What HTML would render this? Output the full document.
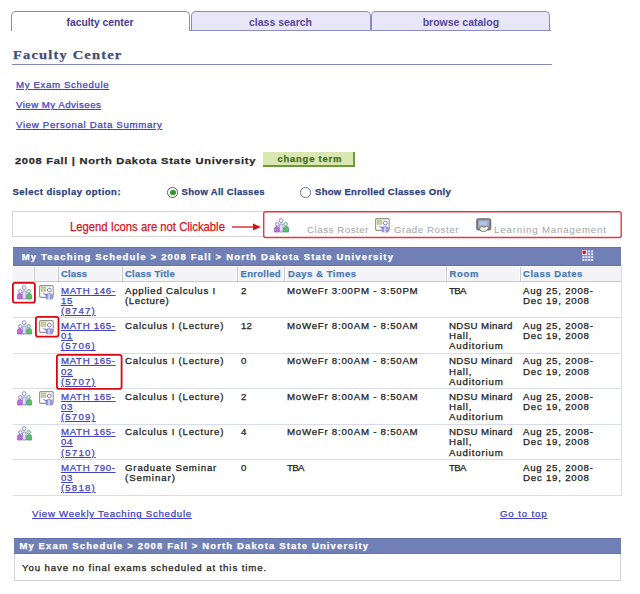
<!DOCTYPE html>
<html>
<head>
<meta charset="utf-8">
<title>Faculty Center</title>
<style>
html,body{margin:0;padding:0;background:#fff;}
body{width:640px;height:594px;position:relative;overflow:hidden;font-family:"Liberation Sans",sans-serif;font-size:10px;color:#222;}
.a{position:absolute;}
.t{position:absolute;white-space:nowrap;line-height:12px;font-family:"Liberation Sans",sans-serif;-webkit-text-stroke:0.25px;}
.lk{color:#4444c0;text-decoration:underline;}
.c{color:#222;}
.lk.c{color:#4444c0;}
.tab{position:absolute;top:10.6px;height:19.4px;box-sizing:border-box;border:1.3px solid #8a88c6;border-bottom:none;border-radius:5px 5px 0 0;background:#e9e7f7;}
.tabt{position:absolute;top:15.6px;font-size:10.5px;line-height:13px;font-weight:bold;color:#5248a0;white-space:nowrap;text-align:center;}
.hd{color:#4a7ab5;}
.nv{color:#2c3f7c;}
.gr{color:#a4a4a4;-webkit-text-stroke:0;}
.vl{position:absolute;top:267px;width:3px;height:14px;background:#fff;}
.vl::after{content:"";position:absolute;left:1px;top:0;width:1px;height:100%;background:#c4c8d4;}
.hl{position:absolute;left:13px;width:608.5px;height:1px;background:#d8dbec;}
.rb{position:absolute;box-sizing:border-box;border:1.8px solid #da0814;border-radius:3px;}
</style>
</head>
<body>
<div class="tab" style="left:10.8px;width:178.8px;background:#fff;height:20px;"></div>
<div class="tab" style="left:190.5px;width:180px;"></div>
<div class="tab" style="left:371.3px;width:179.2px;"></div>
<div class="a" style="left:188.6px;top:29.5px;width:362px;height:1.1px;background:#8f8dc8;"></div>
<div class="tabt" style="left:11px;width:178px;font-size:10.3px;color:#44389a;">faculty center</div>
<div class="tabt" style="left:190.5px;width:180px;">class search</div>
<div class="tabt" style="left:371.3px;width:179.2px;">browse catalog</div>
<div class="t " style="left:12.6px;top:46px;font-size:13.2px;line-height:18px;letter-spacing:1.06px;font-weight:bold;font-family:'Liberation Serif',serif;color:#3f4c7c;transform-origin:0 50%;transform:scaleX(1.1);">Faculty Center</div>
<div class="a" style="left:12px;top:64.1px;width:540px;height:1.4px;background:#7f88b8;"></div>
<div class="t lk" style="left:16px;top:79px;font-size:8.9px;line-height:12px;letter-spacing:0.57px;transform-origin:0 50%;transform:scaleX(1.09);">My Exam Schedule</div>
<div class="t lk" style="left:16px;top:99px;font-size:8.9px;line-height:12px;letter-spacing:0.43px;transform-origin:0 50%;transform:scaleX(1.09);">View My Advisees</div>
<div class="t lk" style="left:16px;top:119px;font-size:8.9px;line-height:12px;letter-spacing:0.62px;transform-origin:0 50%;transform:scaleX(1.09);">View Personal Data Summary</div>
<div class="t " style="left:14.7px;top:154.4px;font-size:9.8px;line-height:14px;letter-spacing:0.62px;font-weight:bold;color:#2a2a2a;transform-origin:0 50%;transform:scaleX(1.13);">2008 Fall | North Dakota State University</div>
<div class="a" style="left:263px;top:152px;width:92px;height:14.6px;background:#dbe7b3;border-right:2px solid #6f9a3a;border-bottom:2px solid #6f9a3a;box-sizing:border-box;"></div>
<div class="t " style="left:277.4px;top:153.4px;font-size:9.5px;line-height:12px;letter-spacing:0.76px;font-weight:bold;color:#3f7020;">change term</div>
<div class="t nv" style="left:12.5px;top:186px;font-size:9.5px;line-height:12px;letter-spacing:0.47px;font-weight:bold;">Select display option:</div>
<div class="a" style="left:167.3px;top:187.1px;width:8.6px;height:8.6px;border:1.4px solid #5a6276;border-radius:50%;background:#fff;"></div>
<div class="a" style="left:170.4px;top:190.2px;width:5.2px;height:5.2px;border-radius:50%;background:#2c9a24;"></div>
<div class="t nv" style="left:181.5px;top:186px;font-size:9.5px;line-height:12px;letter-spacing:0.32px;font-weight:bold;">Show All Classes</div>
<div class="a" style="left:300.3px;top:187px;width:8.6px;height:8.6px;border:1.5px solid #687082;border-radius:50%;background:#fff;"></div>
<div class="t nv" style="left:315px;top:186px;font-size:9.5px;line-height:12px;letter-spacing:0.3px;font-weight:bold;">Show Enrolled Classes Only</div>
<div class="a" style="left:12px;top:211.2px;width:252px;height:26px;box-sizing:border-box;border:1.2px solid #d6d6d6;border-right:none;"></div>
<svg class="a" style="left:261.1px;top:208.7px;" width="362.9" height="31.2"><rect x="2.7" y="2.7" width="357.5" height="25.8" rx="2" fill="none" stroke="#e03a42" stroke-width="1.4"/></svg>
<div class="t" style="left:69.6px;top:219.6px;font-size:12.6px;line-height:14px;color:#d4141c;transform-origin:0 50%;transform:scaleX(0.8958);">Legend Icons are not Clickable</div>
<svg class="a" style="left:230.6px;top:221.8px;" width="32" height="10"><path d="M1 5H24" stroke="#d4141c" stroke-width="1.3"/><path d="M22 1.5L30 5L22 8.5Z" fill="#d4141c"/></svg>
<svg class="a" style="left:274px;top:217.7px;" width="16" height="15"><path d="M0.6 14V10.4Q0.6 8.6 2.8 8.6Q5 8.6 5 10.4V14Z" fill="#cc66dc" stroke="#9060b8" stroke-width="0.8"/><path d="M9.7 14V10.4Q9.7 8.6 12.1 8.6Q14.6 8.6 14.6 10.4V14Z" fill="#52c664" stroke="#509070" stroke-width="0.8"/><path d="M5.6 14V7.6Q5.6 5.8 7.3 5.8Q9 5.8 9 7.6V14Z" fill="#e4e4ff" stroke="#7c7cc8" stroke-width="0.8"/><circle cx="3.3" cy="6.4" r="1.7" fill="#fff" stroke="#9478b8" stroke-width="1"/><circle cx="11.6" cy="6.2" r="1.7" fill="#f0fff4" stroke="#58a486" stroke-width="1"/><circle cx="7.1" cy="2.6" r="1.9" fill="#fff" stroke="#8888c8" stroke-width="1"/></svg>
<div class="t gr" style="left:307px;top:224px;font-size:8.9px;line-height:12px;letter-spacing:0.51px;transform-origin:0 50%;transform:scaleX(1.09);">Class Roster</div>
<svg class="a" style="left:374.6px;top:217.6px;" width="15" height="15"><rect x="0.6" y="0.6" width="13.6" height="11.8" rx="1.2" fill="#fff" stroke="#96967e" stroke-width="1.1"/><rect x="1.8" y="1.7" width="5.4" height="5" fill="#b9b994"/><path d="M1.8 3.4H7.2M1.8 5.1H7.2M4.5 1.7V6.7" stroke="#dcdcc0" stroke-width="0.6"/><path d="M7.2 14V10.2Q7.2 8.4 10.3 8.4Q13.4 8.4 13.4 10.2V14Z" fill="#9c9ce6" stroke="#7c7ccc" stroke-width="0.6"/><path d="M10 9.2V14" stroke="#e6e6ff" stroke-width="1.4"/><path d="M3.2 8.1L8.2 8.9V11.2Z" fill="#7676d4"/><circle cx="10.3" cy="5" r="1.9" fill="#fff" stroke="#7c7cc8" stroke-width="1"/></svg>
<div class="t gr" style="left:394px;top:224px;font-size:8.9px;line-height:12px;letter-spacing:0.53px;transform-origin:0 50%;transform:scaleX(1.09);">Grade Roster</div>
<svg class="a" style="left:476px;top:217.5px;" width="16" height="15"><rect x="1" y="1" width="13.4" height="10.6" rx="1.6" fill="#a4a8b4" stroke="#6a6e78" stroke-width="1.7"/><rect x="3.2" y="3.3" width="8.2" height="4.2" fill="#aac4ec"/><path d="M3.6 11.2Q3.2 8.6 5.6 8.3L8.2 9.2L10.8 8.2Q13.2 8.8 12.6 10.6Q10.6 13.6 7.4 13.6Q4.6 13.6 3.6 11.2Z" fill="#f2f2dc" stroke="#66665a" stroke-width="0.8"/></svg>
<div class="t gr" style="left:493.7px;top:224px;font-size:8.9px;line-height:12px;letter-spacing:0.77px;transform-origin:0 50%;transform:scaleX(1.09);">Learning Management</div>
<div class="a" style="left:13px;top:247px;width:608.4px;height:19.4px;background:#7080b6;box-sizing:border-box;border-top:1px solid #6272ac;border-bottom:1px solid #6272ac;"></div>
<div class="t " style="left:21.7px;top:249.6px;font-size:9.5px;line-height:13px;letter-spacing:1.17px;font-weight:bold;color:#fff;">My Teaching Schedule &gt; 2008 Fall &gt; North Dakota State University</div>
<svg class="a" style="left:581.7px;top:249.7px;" width="12" height="12"><rect x="0" y="0" width="4.9" height="5" fill="#fdeef0"/><rect x="3.30" y="0.40" width="2.1" height="2.05" fill="#e2e2ff"/><rect x="6.20" y="0.40" width="2.1" height="2.05" fill="#e2e2ff"/><rect x="9.10" y="0.40" width="2.1" height="2.05" fill="#e2e2ff"/><rect x="0.40" y="3.25" width="2.1" height="2.05" fill="#e2e2ff"/><rect x="3.30" y="3.25" width="2.1" height="2.05" fill="#e2e2ff"/><rect x="6.20" y="3.25" width="2.1" height="2.05" fill="#e2e2ff"/><rect x="9.10" y="3.25" width="2.1" height="2.05" fill="#e2e2ff"/><rect x="0.40" y="6.10" width="2.1" height="2.05" fill="#e2e2ff"/><rect x="3.30" y="6.10" width="2.1" height="2.05" fill="#e2e2ff"/><rect x="6.20" y="6.10" width="2.1" height="2.05" fill="#e2e2ff"/><rect x="9.10" y="6.10" width="2.1" height="2.05" fill="#e2e2ff"/><rect x="0.40" y="8.95" width="2.1" height="2.05" fill="#e2e2ff"/><rect x="3.30" y="8.95" width="2.1" height="2.05" fill="#e2e2ff"/><rect x="6.20" y="8.95" width="2.1" height="2.05" fill="#e2e2ff"/><rect x="9.10" y="8.95" width="2.1" height="2.05" fill="#e2e2ff"/><rect x="0.5" y="0.5" width="3.4" height="3.6" rx="0.8" fill="#df1c2c"/></svg>
<div class="a" style="left:13px;top:267.3px;width:608.4px;height:14.6px;background:#f4f4f7;border-bottom:1px solid #c6cad4;box-sizing:border-box;"></div>
<div class="vl" style="left:32.7px;"></div>
<div class="vl" style="left:56.8px;"></div>
<div class="vl" style="left:120.7px;"></div>
<div class="vl" style="left:236.4px;"></div>
<div class="vl" style="left:283.1px;"></div>
<div class="vl" style="left:444.5px;"></div>
<div class="vl" style="left:519px;"></div>
<div class="t hd" style="left:61px;top:268.4px;font-size:9.5px;line-height:12px;letter-spacing:0.16px;font-weight:bold;">Class</div>
<div class="t hd" style="left:125px;top:268.4px;font-size:9.5px;line-height:12px;letter-spacing:0.24px;font-weight:bold;">Class Title</div>
<div class="t hd" style="left:240.5px;top:268.4px;font-size:9.5px;line-height:12px;letter-spacing:0.29px;font-weight:bold;">Enrolled</div>
<div class="t hd" style="left:288px;top:268.4px;font-size:9.5px;line-height:12px;letter-spacing:0.54px;font-weight:bold;">Days &amp; Times</div>
<div class="t hd" style="left:449.5px;top:268.4px;font-size:9.5px;line-height:12px;letter-spacing:0.68px;font-weight:bold;">Room</div>
<div class="t hd" style="left:523px;top:268.4px;font-size:9.5px;line-height:12px;letter-spacing:0.54px;font-weight:bold;">Class Dates</div>
<div class="a" style="left:620.5px;top:266px;width:1px;height:229.8px;background:#d8dbec;"></div>
<div class="hl" style="top:317.2px;"></div>
<div class="hl" style="top:352.7px;"></div>
<div class="hl" style="top:388.1px;"></div>
<div class="hl" style="top:423.6px;"></div>
<div class="hl" style="top:459.2px;"></div>
<div class="hl" style="top:494.8px;"></div>
<!-- row 1 -->
<svg class="a" style="left:16.6px;top:284.6px;" width="16" height="15"><path d="M0.6 14V10.4Q0.6 8.6 2.8 8.6Q5 8.6 5 10.4V14Z" fill="#cc66dc" stroke="#9060b8" stroke-width="0.8"/><path d="M9.7 14V10.4Q9.7 8.6 12.1 8.6Q14.6 8.6 14.6 10.4V14Z" fill="#52c664" stroke="#509070" stroke-width="0.8"/><path d="M5.6 14V7.6Q5.6 5.8 7.3 5.8Q9 5.8 9 7.6V14Z" fill="#e4e4ff" stroke="#7c7cc8" stroke-width="0.8"/><circle cx="3.3" cy="6.4" r="1.7" fill="#fff" stroke="#9478b8" stroke-width="1"/><circle cx="11.6" cy="6.2" r="1.7" fill="#f0fff4" stroke="#58a486" stroke-width="1"/><circle cx="7.1" cy="2.6" r="1.9" fill="#fff" stroke="#8888c8" stroke-width="1"/></svg>
<svg class="a" style="left:39.2px;top:284.6px;" width="15" height="15"><rect x="0.6" y="0.6" width="13.6" height="11.8" rx="1.2" fill="#fff" stroke="#96967e" stroke-width="1.1"/><rect x="1.8" y="1.7" width="5.4" height="5" fill="#b9b994"/><path d="M1.8 3.4H7.2M1.8 5.1H7.2M4.5 1.7V6.7" stroke="#dcdcc0" stroke-width="0.6"/><path d="M7.2 14V10.2Q7.2 8.4 10.3 8.4Q13.4 8.4 13.4 10.2V14Z" fill="#9c9ce6" stroke="#7c7ccc" stroke-width="0.6"/><path d="M10 9.2V14" stroke="#e6e6ff" stroke-width="1.4"/><path d="M3.2 8.1L8.2 8.9V11.2Z" fill="#7676d4"/><circle cx="10.3" cy="5" r="1.9" fill="#fff" stroke="#7c7cc8" stroke-width="1"/></svg>
<div class="t c lk" style="left:61.3px;top:285.5px;font-size:8.9px;line-height:10.3px;transform-origin:0 50%;transform:scaleX(1.09);"><span style="letter-spacing:0.6px">MATH 146-</span><br><span style="letter-spacing:0.61px">15</span><br><span style="letter-spacing:1.04px">(8747)</span></div>
<div class="t c " style="left:124.8px;top:285.5px;font-size:8.9px;line-height:10.3px;transform-origin:0 50%;transform:scaleX(1.09);"><span style="letter-spacing:0.69px">Applied Calculus I</span><br><span style="letter-spacing:0.57px">(Lecture)</span></div>
<div class="t c " style="left:240.5px;top:285.5px;font-size:8.9px;line-height:10.3px;transform-origin:0 50%;transform:scaleX(1.09);"><span style="letter-spacing:0.9px">2</span></div>
<div class="t c " style="left:286.8px;top:285.5px;font-size:8.9px;line-height:10.3px;transform-origin:0 50%;transform:scaleX(1.09);"><span style="letter-spacing:0.69px">MoWeFr 3:00PM - 3:50PM</span></div>
<div class="t c " style="left:449px;top:285.5px;font-size:8.9px;line-height:10.3px;transform-origin:0 50%;transform:scaleX(1.09);"><span style="letter-spacing:-0.64px">TBA</span></div>
<div class="t c " style="left:523px;top:285.5px;font-size:8.9px;line-height:10.3px;transform-origin:0 50%;transform:scaleX(1.09);"><span style="letter-spacing:0.7px">Aug 25, 2008-</span><br><span style="letter-spacing:0.7px">Dec 19, 2008</span></div>
<!-- row 2 -->
<svg class="a" style="left:16.6px;top:320.0px;" width="16" height="15"><path d="M0.6 14V10.4Q0.6 8.6 2.8 8.6Q5 8.6 5 10.4V14Z" fill="#cc66dc" stroke="#9060b8" stroke-width="0.8"/><path d="M9.7 14V10.4Q9.7 8.6 12.1 8.6Q14.6 8.6 14.6 10.4V14Z" fill="#52c664" stroke="#509070" stroke-width="0.8"/><path d="M5.6 14V7.6Q5.6 5.8 7.3 5.8Q9 5.8 9 7.6V14Z" fill="#e4e4ff" stroke="#7c7cc8" stroke-width="0.8"/><circle cx="3.3" cy="6.4" r="1.7" fill="#fff" stroke="#9478b8" stroke-width="1"/><circle cx="11.6" cy="6.2" r="1.7" fill="#f0fff4" stroke="#58a486" stroke-width="1"/><circle cx="7.1" cy="2.6" r="1.9" fill="#fff" stroke="#8888c8" stroke-width="1"/></svg>
<svg class="a" style="left:39.2px;top:320.0px;" width="15" height="15"><rect x="0.6" y="0.6" width="13.6" height="11.8" rx="1.2" fill="#fff" stroke="#96967e" stroke-width="1.1"/><rect x="1.8" y="1.7" width="5.4" height="5" fill="#b9b994"/><path d="M1.8 3.4H7.2M1.8 5.1H7.2M4.5 1.7V6.7" stroke="#dcdcc0" stroke-width="0.6"/><path d="M7.2 14V10.2Q7.2 8.4 10.3 8.4Q13.4 8.4 13.4 10.2V14Z" fill="#9c9ce6" stroke="#7c7ccc" stroke-width="0.6"/><path d="M10 9.2V14" stroke="#e6e6ff" stroke-width="1.4"/><path d="M3.2 8.1L8.2 8.9V11.2Z" fill="#7676d4"/><circle cx="10.3" cy="5" r="1.9" fill="#fff" stroke="#7c7cc8" stroke-width="1"/></svg>
<div class="t c lk" style="left:61.3px;top:320.9px;font-size:8.9px;line-height:10.3px;transform-origin:0 50%;transform:scaleX(1.09);"><span style="letter-spacing:0.6px">MATH 165-</span><br><span style="letter-spacing:0.61px">01</span><br><span style="letter-spacing:1.04px">(5706)</span></div>
<div class="t c " style="left:124.8px;top:320.9px;font-size:8.9px;line-height:10.3px;transform-origin:0 50%;transform:scaleX(1.09);"><span style="letter-spacing:0.7px">Calculus I (Lecture)</span></div>
<div class="t c " style="left:240.5px;top:320.9px;font-size:8.9px;line-height:10.3px;transform-origin:0 50%;transform:scaleX(1.09);"><span style="letter-spacing:0.16px">12</span></div>
<div class="t c " style="left:286.8px;top:320.9px;font-size:8.9px;line-height:10.3px;transform-origin:0 50%;transform:scaleX(1.09);"><span style="letter-spacing:0.69px">MoWeFr 8:00AM - 8:50AM</span></div>
<div class="t c " style="left:449px;top:320.9px;font-size:8.9px;line-height:10.3px;transform-origin:0 50%;transform:scaleX(1.09);"><span style="letter-spacing:0.35px">NDSU Minard</span><br><span style="letter-spacing:0.68px">Hall,</span><br><span style="letter-spacing:0.78px">Auditorium</span></div>
<div class="t c " style="left:523px;top:320.9px;font-size:8.9px;line-height:10.3px;transform-origin:0 50%;transform:scaleX(1.09);"><span style="letter-spacing:0.7px">Aug 25, 2008-</span><br><span style="letter-spacing:0.7px">Dec 19, 2008</span></div>
<!-- row 3 -->
<div class="t c lk" style="left:61.3px;top:356.3px;font-size:8.9px;line-height:10.3px;transform-origin:0 50%;transform:scaleX(1.09);"><span style="letter-spacing:0.6px">MATH 165-</span><br><span style="letter-spacing:0.61px">02</span><br><span style="letter-spacing:1.04px">(5707)</span></div>
<div class="t c " style="left:124.8px;top:356.3px;font-size:8.9px;line-height:10.3px;transform-origin:0 50%;transform:scaleX(1.09);"><span style="letter-spacing:0.7px">Calculus I (Lecture)</span></div>
<div class="t c " style="left:240.5px;top:356.3px;font-size:8.9px;line-height:10.3px;transform-origin:0 50%;transform:scaleX(1.09);"><span style="letter-spacing:0.9px">0</span></div>
<div class="t c " style="left:286.8px;top:356.3px;font-size:8.9px;line-height:10.3px;transform-origin:0 50%;transform:scaleX(1.09);"><span style="letter-spacing:0.69px">MoWeFr 8:00AM - 8:50AM</span></div>
<div class="t c " style="left:449px;top:356.3px;font-size:8.9px;line-height:10.3px;transform-origin:0 50%;transform:scaleX(1.09);"><span style="letter-spacing:0.35px">NDSU Minard</span><br><span style="letter-spacing:0.68px">Hall,</span><br><span style="letter-spacing:0.78px">Auditorium</span></div>
<div class="t c " style="left:523px;top:356.3px;font-size:8.9px;line-height:10.3px;transform-origin:0 50%;transform:scaleX(1.09);"><span style="letter-spacing:0.7px">Aug 25, 2008-</span><br><span style="letter-spacing:0.7px">Dec 19, 2008</span></div>
<!-- row 4 -->
<svg class="a" style="left:16.6px;top:390.8px;" width="16" height="15"><path d="M0.6 14V10.4Q0.6 8.6 2.8 8.6Q5 8.6 5 10.4V14Z" fill="#cc66dc" stroke="#9060b8" stroke-width="0.8"/><path d="M9.7 14V10.4Q9.7 8.6 12.1 8.6Q14.6 8.6 14.6 10.4V14Z" fill="#52c664" stroke="#509070" stroke-width="0.8"/><path d="M5.6 14V7.6Q5.6 5.8 7.3 5.8Q9 5.8 9 7.6V14Z" fill="#e4e4ff" stroke="#7c7cc8" stroke-width="0.8"/><circle cx="3.3" cy="6.4" r="1.7" fill="#fff" stroke="#9478b8" stroke-width="1"/><circle cx="11.6" cy="6.2" r="1.7" fill="#f0fff4" stroke="#58a486" stroke-width="1"/><circle cx="7.1" cy="2.6" r="1.9" fill="#fff" stroke="#8888c8" stroke-width="1"/></svg>
<svg class="a" style="left:39.2px;top:390.8px;" width="15" height="15"><rect x="0.6" y="0.6" width="13.6" height="11.8" rx="1.2" fill="#fff" stroke="#96967e" stroke-width="1.1"/><rect x="1.8" y="1.7" width="5.4" height="5" fill="#b9b994"/><path d="M1.8 3.4H7.2M1.8 5.1H7.2M4.5 1.7V6.7" stroke="#dcdcc0" stroke-width="0.6"/><path d="M7.2 14V10.2Q7.2 8.4 10.3 8.4Q13.4 8.4 13.4 10.2V14Z" fill="#9c9ce6" stroke="#7c7ccc" stroke-width="0.6"/><path d="M10 9.2V14" stroke="#e6e6ff" stroke-width="1.4"/><path d="M3.2 8.1L8.2 8.9V11.2Z" fill="#7676d4"/><circle cx="10.3" cy="5" r="1.9" fill="#fff" stroke="#7c7cc8" stroke-width="1"/></svg>
<div class="t c lk" style="left:61.3px;top:391.7px;font-size:8.9px;line-height:10.3px;transform-origin:0 50%;transform:scaleX(1.09);"><span style="letter-spacing:0.6px">MATH 165-</span><br><span style="letter-spacing:0.61px">03</span><br><span style="letter-spacing:1.04px">(5709)</span></div>
<div class="t c " style="left:124.8px;top:391.7px;font-size:8.9px;line-height:10.3px;transform-origin:0 50%;transform:scaleX(1.09);"><span style="letter-spacing:0.7px">Calculus I (Lecture)</span></div>
<div class="t c " style="left:240.5px;top:391.7px;font-size:8.9px;line-height:10.3px;transform-origin:0 50%;transform:scaleX(1.09);"><span style="letter-spacing:0.9px">2</span></div>
<div class="t c " style="left:286.8px;top:391.7px;font-size:8.9px;line-height:10.3px;transform-origin:0 50%;transform:scaleX(1.09);"><span style="letter-spacing:0.69px">MoWeFr 8:00AM - 8:50AM</span></div>
<div class="t c " style="left:449px;top:391.7px;font-size:8.9px;line-height:10.3px;transform-origin:0 50%;transform:scaleX(1.09);"><span style="letter-spacing:0.35px">NDSU Minard</span><br><span style="letter-spacing:0.68px">Hall,</span><br><span style="letter-spacing:0.78px">Auditorium</span></div>
<div class="t c " style="left:523px;top:391.7px;font-size:8.9px;line-height:10.3px;transform-origin:0 50%;transform:scaleX(1.09);"><span style="letter-spacing:0.7px">Aug 25, 2008-</span><br><span style="letter-spacing:0.7px">Dec 19, 2008</span></div>
<!-- row 5 -->
<svg class="a" style="left:16.6px;top:426.2px;" width="16" height="15"><path d="M0.6 14V10.4Q0.6 8.6 2.8 8.6Q5 8.6 5 10.4V14Z" fill="#cc66dc" stroke="#9060b8" stroke-width="0.8"/><path d="M9.7 14V10.4Q9.7 8.6 12.1 8.6Q14.6 8.6 14.6 10.4V14Z" fill="#52c664" stroke="#509070" stroke-width="0.8"/><path d="M5.6 14V7.6Q5.6 5.8 7.3 5.8Q9 5.8 9 7.6V14Z" fill="#e4e4ff" stroke="#7c7cc8" stroke-width="0.8"/><circle cx="3.3" cy="6.4" r="1.7" fill="#fff" stroke="#9478b8" stroke-width="1"/><circle cx="11.6" cy="6.2" r="1.7" fill="#f0fff4" stroke="#58a486" stroke-width="1"/><circle cx="7.1" cy="2.6" r="1.9" fill="#fff" stroke="#8888c8" stroke-width="1"/></svg>
<div class="t c lk" style="left:61.3px;top:427.1px;font-size:8.9px;line-height:10.3px;transform-origin:0 50%;transform:scaleX(1.09);"><span style="letter-spacing:0.6px">MATH 165-</span><br><span style="letter-spacing:0.61px">04</span><br><span style="letter-spacing:1.04px">(5710)</span></div>
<div class="t c " style="left:124.8px;top:427.1px;font-size:8.9px;line-height:10.3px;transform-origin:0 50%;transform:scaleX(1.09);"><span style="letter-spacing:0.7px">Calculus I (Lecture)</span></div>
<div class="t c " style="left:240.5px;top:427.1px;font-size:8.9px;line-height:10.3px;transform-origin:0 50%;transform:scaleX(1.09);"><span style="letter-spacing:0.9px">4</span></div>
<div class="t c " style="left:286.8px;top:427.1px;font-size:8.9px;line-height:10.3px;transform-origin:0 50%;transform:scaleX(1.09);"><span style="letter-spacing:0.69px">MoWeFr 8:00AM - 8:50AM</span></div>
<div class="t c " style="left:449px;top:427.1px;font-size:8.9px;line-height:10.3px;transform-origin:0 50%;transform:scaleX(1.09);"><span style="letter-spacing:0.35px">NDSU Minard</span><br><span style="letter-spacing:0.68px">Hall,</span><br><span style="letter-spacing:0.78px">Auditorium</span></div>
<div class="t c " style="left:523px;top:427.1px;font-size:8.9px;line-height:10.3px;transform-origin:0 50%;transform:scaleX(1.09);"><span style="letter-spacing:0.7px">Aug 25, 2008-</span><br><span style="letter-spacing:0.7px">Dec 19, 2008</span></div>
<!-- row 6 -->
<div class="t c lk" style="left:61.3px;top:462.5px;font-size:8.9px;line-height:10.3px;transform-origin:0 50%;transform:scaleX(1.09);"><span style="letter-spacing:0.6px">MATH 790-</span><br><span style="letter-spacing:0.61px">03</span><br><span style="letter-spacing:1.04px">(5818)</span></div>
<div class="t c " style="left:124.8px;top:462.5px;font-size:8.9px;line-height:10.3px;transform-origin:0 50%;transform:scaleX(1.09);"><span style="letter-spacing:0.75px">Graduate Seminar</span><br><span style="letter-spacing:0.86px">(Seminar)</span></div>
<div class="t c " style="left:240.5px;top:462.5px;font-size:8.9px;line-height:10.3px;transform-origin:0 50%;transform:scaleX(1.09);"><span style="letter-spacing:0.9px">0</span></div>
<div class="t c " style="left:286.8px;top:462.5px;font-size:8.9px;line-height:10.3px;transform-origin:0 50%;transform:scaleX(1.09);"><span style="letter-spacing:-0.64px">TBA</span></div>
<div class="t c " style="left:449px;top:462.5px;font-size:8.9px;line-height:10.3px;transform-origin:0 50%;transform:scaleX(1.09);"><span style="letter-spacing:-0.64px">TBA</span></div>
<div class="t c " style="left:523px;top:462.5px;font-size:8.9px;line-height:10.3px;transform-origin:0 50%;transform:scaleX(1.09);"><span style="letter-spacing:0.7px">Aug 25, 2008-</span><br><span style="letter-spacing:0.7px">Dec 19, 2008</span></div>
<svg class="a" style="left:10px;top:279.5px;" width="27.8" height="25.6"><rect x="2.9" y="2.9" width="22.0" height="19.8" rx="2.2" fill="none" stroke="#da0814" stroke-width="1.8"/></svg>
<svg class="a" style="left:32.5px;top:313.6px;" width="28.4" height="25.5"><rect x="2.9" y="2.9" width="22.599999999999998" height="19.7" rx="2.2" fill="none" stroke="#da0814" stroke-width="1.8"/></svg>
<svg class="a" style="left:54px;top:351.7px;" width="70.5" height="39.8"><rect x="2.9" y="2.9" width="64.7" height="34.0" rx="2.2" fill="none" stroke="#da0814" stroke-width="1.8"/></svg>
<div class="t lk" style="left:32px;top:508px;font-size:8.9px;line-height:12px;letter-spacing:0.65px;transform-origin:0 50%;transform:scaleX(1.09);">View Weekly Teaching Schedule</div>
<div class="t lk" style="left:500.3px;top:508px;font-size:8.9px;line-height:12px;letter-spacing:0.78px;transform-origin:0 50%;transform:scaleX(1.09);">Go to top</div>
<div class="a" style="left:14px;top:538px;width:607px;height:43px;box-sizing:border-box;border:1px solid #d0d2dc;"></div>
<div class="a" style="left:14px;top:537.6px;width:607.4px;height:16.2px;background:#7080b6;box-sizing:border-box;border-top:1px solid #6272ac;border-bottom:1px solid #6272ac;"></div>
<div class="t " style="left:19.4px;top:540.4px;font-size:9.5px;line-height:12px;letter-spacing:1.13px;font-weight:bold;color:#fff;">My Exam Schedule &gt; 2008 Fall &gt; North Dakota State University</div>
<div class="t " style="left:21.9px;top:561.7px;font-size:8.9px;line-height:12px;letter-spacing:0.8px;color:#222;transform-origin:0 50%;transform:scaleX(1.09);">You have no final exams scheduled at this time.</div>
</body>
</html>
